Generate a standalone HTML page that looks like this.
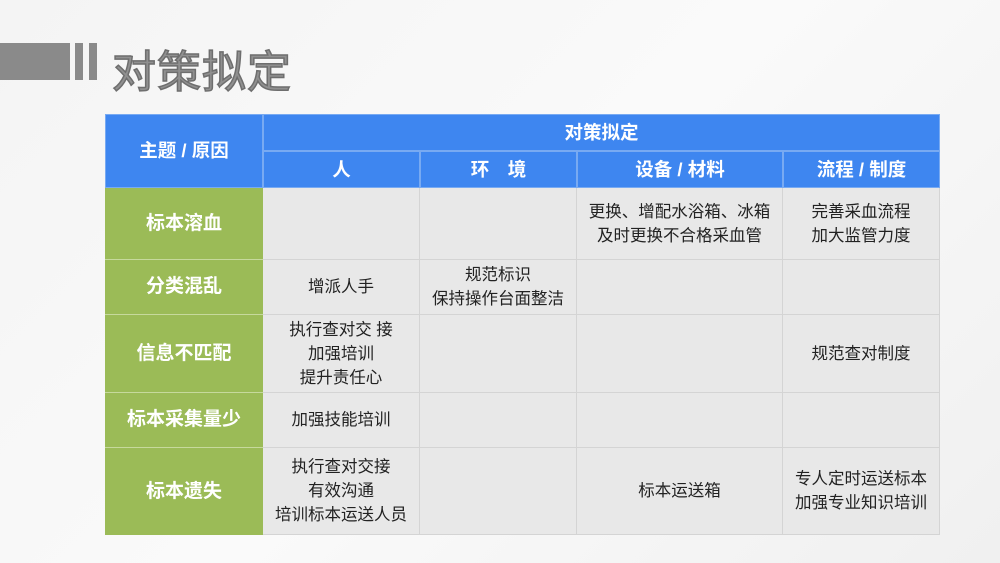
<!DOCTYPE html>
<html><head><meta charset="utf-8"><style>
body{margin:0;width:1000px;height:563px;overflow:hidden;background:linear-gradient(135deg,#f4f4f4,#fafafa 50%,#f0f0f0);font-family:"Liberation Sans","Noto Sans CJK SC",sans-serif;position:relative}
.b{position:absolute;background:#8a8a8a}
.t{position:absolute;left:112px;top:36px;font-size:44px;font-weight:normal;color:#909090;letter-spacing:1px;-webkit-text-stroke:1.5px #6e6e6e}
.c{position:absolute;display:flex;align-items:center;justify-content:center;text-align:center;box-sizing:border-box;font-size:16.5px;line-height:24px;color:#222;white-space:nowrap}
.h{background:#3e86f0;color:#fff;font-weight:bold;font-size:18.5px;border:1px solid #78aaf2}
.g{background:#9bbb57;color:#fff;font-weight:bold;font-size:19px;border-bottom:1px solid #c6d99c}
.d{background:#e8e8e8;border-right:1px solid #d4d4d4;border-bottom:1px solid #d4d4d4}
</style></head><body>
<div class="b" style="left:0;top:43px;width:70px;height:37px"></div>
<div class="b" style="left:75px;top:43px;width:8px;height:37px"></div>
<div class="b" style="left:89px;top:43px;width:8px;height:37px"></div>
<div class="t">对策拟定</div>

<div class="c h" style="left:105px;top:114px;width:158px;height:74px">主题 / 原因</div>
<div class="c h" style="left:263px;top:114px;width:677px;height:37px">对策拟定</div>
<div class="c h" style="left:263px;top:151px;width:157px;height:37px">人</div>
<div class="c h" style="left:420px;top:151px;width:157px;height:37px">环　境</div>
<div class="c h" style="left:577px;top:151px;width:206px;height:37px">设备 / 材料</div>
<div class="c h" style="left:783px;top:151px;width:157px;height:37px">流程 / 制度</div>

<div class="c g" style="left:105px;top:188px;width:158px;height:72px">标本溶血</div>
<div class="c d" style="left:263px;top:188px;width:157px;height:72px"></div>
<div class="c d" style="left:420px;top:188px;width:157px;height:72px"></div>
<div class="c d" style="left:577px;top:188px;width:206px;height:72px">更换、增配水浴箱、冰箱<br>及时更换不合格采血管</div>
<div class="c d" style="left:783px;top:188px;width:157px;height:72px">完善采血流程<br>加大监管力度</div>

<div class="c g" style="left:105px;top:260px;width:158px;height:55px">分类混乱</div>
<div class="c d" style="left:263px;top:260px;width:157px;height:55px">增派人手</div>
<div class="c d" style="left:420px;top:260px;width:157px;height:55px">规范标识<br>保持操作台面整洁</div>
<div class="c d" style="left:577px;top:260px;width:206px;height:55px"></div>
<div class="c d" style="left:783px;top:260px;width:157px;height:55px"></div>

<div class="c g" style="left:105px;top:315px;width:158px;height:78px">信息不匹配</div>
<div class="c d" style="left:263px;top:315px;width:157px;height:78px">执行查对交 接<br>加强培训<br>提升责任心</div>
<div class="c d" style="left:420px;top:315px;width:157px;height:78px"></div>
<div class="c d" style="left:577px;top:315px;width:206px;height:78px"></div>
<div class="c d" style="left:783px;top:315px;width:157px;height:78px">规范查对制度</div>

<div class="c g" style="left:105px;top:393px;width:158px;height:55px">标本采集量少</div>
<div class="c d" style="left:263px;top:393px;width:157px;height:55px">加强技能培训</div>
<div class="c d" style="left:420px;top:393px;width:157px;height:55px"></div>
<div class="c d" style="left:577px;top:393px;width:206px;height:55px"></div>
<div class="c d" style="left:783px;top:393px;width:157px;height:55px"></div>

<div class="c g" style="left:105px;top:448px;width:158px;height:87px;border-bottom:none">标本遗失</div>
<div class="c d" style="left:263px;top:448px;width:157px;height:87px">执行查对交接<br>有效沟通<br>培训标本运送人员</div>
<div class="c d" style="left:420px;top:448px;width:157px;height:87px"></div>
<div class="c d" style="left:577px;top:448px;width:206px;height:87px">标本运送箱</div>
<div class="c d" style="left:783px;top:448px;width:157px;height:87px">专人定时运送标本<br>加强专业知识培训</div>
</body></html>
